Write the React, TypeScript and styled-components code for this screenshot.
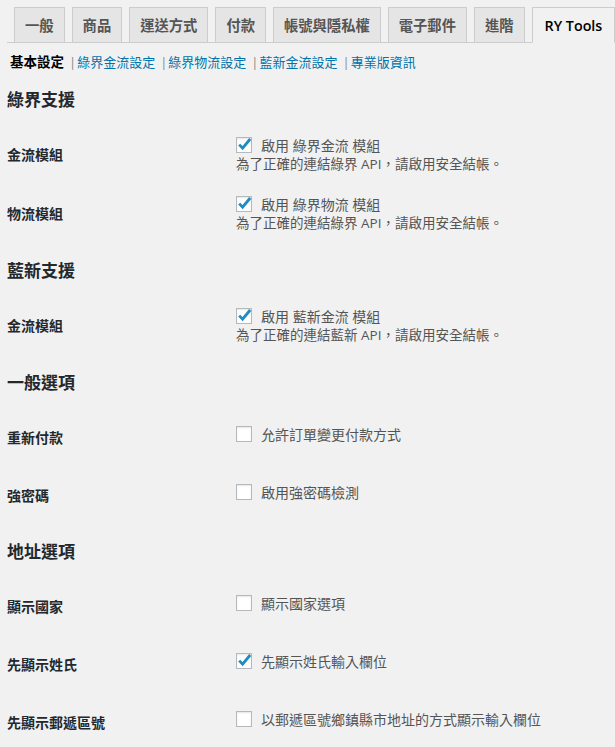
import React from "react"
import styled, { createGlobalStyle } from "styled-components"

const GlobalStyle = createGlobalStyle`
  html, body {
    margin: 0;
    padding: 0;
    background: #f1f1f1;
  }
  body {
    font-family: "Open Sans", "Noto Sans CJK TC", sans-serif;
    color: #444;
  }
`

type Option = {
  label: string
  text: string
  checked?: boolean
  description?: string
}

type Group = {
  title: string
  options: Option[]
}

const tabs = ["一般", "商品", "運送方式", "付款", "帳號與隱私權", "電子郵件", "進階", "RY Tools"]

const sections = ["綠界金流設定", "綠界物流設定", "藍新金流設定", "專業版資訊"]

const groups: Group[] = [
  {
    title: "綠界支援",
    options: [
      {
        label: "金流模組",
        text: "啟用 綠界金流 模組",
        checked: true,
        description: "為了正確的連結綠界 API，請啟用安全結帳。",
      },
      {
        label: "物流模組",
        text: "啟用 綠界物流 模組",
        checked: true,
        description: "為了正確的連結綠界 API，請啟用安全結帳。",
      },
    ],
  },
  {
    title: "藍新支援",
    options: [
      {
        label: "金流模組",
        text: "啟用 藍新金流 模組",
        checked: true,
        description: "為了正確的連結藍新 API，請啟用安全結帳。",
      },
    ],
  },
  {
    title: "一般選項",
    options: [
      { label: "重新付款", text: "允許訂單變更付款方式" },
      { label: "強密碼", text: "啟用強密碼檢測" },
    ],
  },
  {
    title: "地址選項",
    options: [
      { label: "顯示國家", text: "顯示國家選項" },
      { label: "先顯示姓氏", text: "先顯示姓氏輸入欄位", checked: true },
      { label: "先顯示郵遞區號", text: "以郵遞區號鄉鎮縣市地址的方式顯示輸入欄位" },
    ],
  },
]

const Page = styled.div`
  padding: 0 0 0 7px;
`

const TabBar = styled.nav`
  display: flex;
  align-items: flex-end;
  padding-top: 7px;
  border-bottom: 1px solid #ccc;
`

const Tab = styled.a<{ $active?: boolean }>`
  display: flex;
  align-items: center;
  box-sizing: border-box;
  height: ${(p) => (p.$active ? "36px" : "35px")};
  margin-left: 7px;
  margin-bottom: ${(p) => (p.$active ? "-1px" : "0")};
  padding: 1px ${(p) => (p.$active ? "12px" : "10px")} 0;
  border: 1px solid #ccc;
  border-bottom: ${(p) => (p.$active ? "1px solid #f1f1f1" : "none")};
  background: ${(p) => (p.$active ? "#f1f1f1" : "#e5e5e5")};
  color: ${(p) => (p.$active ? "#000" : "#555")};
  font-size: 14.3px;
  font-weight: 600;
  line-height: 20px;
  white-space: nowrap;
`

const SubNav = styled.ul`
  display: flex;
  align-items: center;
  list-style: none;
  margin: 9px 0 3px;
  padding: 0 0 0 3px;
  font-size: 13px;
  line-height: 20px;
`

const Current = styled.li`
  color: #000;
  font-weight: 700;
  font-size: 13.5px;
`

const SubLink = styled.li`
  color: #0073aa;
`

const Sep = styled.span`
  display: inline-block;
  margin: 0 1px 0 5px;
  color: #888;
`

const Heading = styled.h2`
  margin: 16px 0 13px;
  font-size: 17px;
  font-weight: 600;
  line-height: 24px;
  color: #23282d;
`

const Row = styled.div<{ $desc?: boolean }>`
  display: grid;
  grid-template-columns: 229px 1fr;
  height: ${(p) => (p.$desc ? "59px" : "58px")};
`

const Label = styled.div`
  padding-top: 20px;
  font-size: 14px;
  font-weight: 700;
  line-height: 20px;
  color: #23282d;
`

const Field = styled.div<{ $desc?: boolean }>`
  padding-top: ${(p) => (p.$desc ? "12px" : "18px")};
`

const OptionLine = styled.label`
  display: flex;
  align-items: center;
  gap: 9px;
  height: 16px;
  font-size: 14px;
  color: #555;
  white-space: nowrap;
`

const Box = styled.span`
  position: relative;
  flex: none;
  box-sizing: border-box;
  width: 16px;
  height: 16px;
  border: 1px solid #b4b9be;
  background: #fff;
  box-shadow: inset 0 1px 2px rgba(0, 0, 0, 0.1);
`

const Tick = styled.svg`
  position: absolute;
  left: -1px;
  top: -2px;
  width: 17px;
  height: 17px;
`

const Description = styled.p`
  margin: 0;
  font-size: 13.5px;
  line-height: 22px;
  color: #555;
  white-space: nowrap;
`

const Checkbox = ({ checked }: { checked?: boolean }) => (
  <Box>
    {checked && (
      <Tick viewBox="0 0 17 17">
        <path d="M3.2 8.6 L6.6 12.2 L14.2 3" fill="none" stroke="#1e8cbe" strokeWidth="2.8" />
      </Tick>
    )}
  </Box>
)

export default function App() {
  return (
    <Page>
      <GlobalStyle />
      <TabBar>
        {tabs.map((t) => (
          <Tab key={t} $active={t === "RY Tools"}>
            {t}
          </Tab>
        ))}
      </TabBar>

      <SubNav>
        <Current>基本設定</Current>
        {sections.map((s) => (
          <SubLink key={s}>
            <Sep>|</Sep>
            {s}
          </SubLink>
        ))}
      </SubNav>

      {groups.map((g) => (
        <section key={g.title}>
          <Heading>{g.title}</Heading>
          {g.options.map((o) => (
            <Row key={o.label + o.text} $desc={!!o.description}>
              <Label>{o.label}</Label>
              <Field $desc={!!o.description}>
                <OptionLine>
                  <Checkbox checked={o.checked} />
                  {o.text}
                </OptionLine>
                {o.description && <Description>{o.description}</Description>}
              </Field>
            </Row>
          ))}
        </section>
      ))}
    </Page>
  )
}
